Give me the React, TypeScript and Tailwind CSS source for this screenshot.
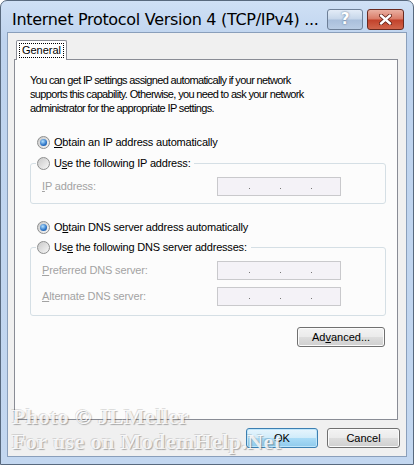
import React from 'react'

const UI_FONT = "font-['Liberation_Sans',Arial,sans-serif]"

const Radio = ({ checked }: { checked?: boolean }) => (
  <span className="flex h-[13px] w-[13px] shrink-0 items-center justify-center rounded-full border border-[#8e8f8f] bg-[linear-gradient(135deg,#c9c9c9,#f7f7f7)]">
    {checked && (
      <span className="h-[7px] w-[7px] rounded-full bg-[radial-gradient(circle_at_40%_35%,#b4e2ff,#2a72c6_60%,#0c4590)]" />
    )}
  </span>
)

const RadioRow = ({ checked, children }: { checked?: boolean; children: React.ReactNode }) => (
  <div className="flex h-[20px] items-center gap-[4px] px-[1px]">
    <Radio checked={checked} />
    <span className="whitespace-nowrap tracking-[-0.2px] text-black">{children}</span>
  </div>
)

const AddrBox = () => (
  <div className="flex h-[19px] w-[124px] items-center border border-[#c9c9cc] bg-[#f4f2f7] pl-[31px]">
    <span className="mt-[4px] h-[1px] w-[1px] bg-[#777]" />
    <span className="ml-[30px] mt-[4px] h-[1px] w-[1px] bg-[#777]" />
    <span className="ml-[30px] mt-[4px] h-[1px] w-[1px] bg-[#777]" />
  </div>
)

const AddrRow = ({ label }: { label: React.ReactNode }) => (
  <div className="flex items-center">
    <span className="w-[175px] whitespace-nowrap tracking-[-0.15px] text-[#a3a3a3]">{label}</span>
    <AddrBox />
  </div>
)

const Button = ({ children, primary, className = '' }: { children: React.ReactNode; primary?: boolean; className?: string }) => (
  <div
    className={`flex h-[20px] items-center justify-center rounded-[3px] border text-black ${
      primary
        ? 'border-[#3c7fb1] bg-[linear-gradient(#e7f5fd,#d1ecfa_48%,#a9dbf6_52%,#8fcaec)] shadow-[inset_0_0_0_1px_#bfe6fb]'
        : 'border-[#707070] bg-[linear-gradient(#f3f3f3,#ebebeb_48%,#dddddd_52%,#cfcfcf)] shadow-[inset_0_0_0_1px_#fbfbfb]'
    } ${className}`}
  >
    {children}
  </div>
)

export default function App() {
  return (
    <div className={`relative h-[465px] w-[414px] overflow-hidden bg-white text-[11px] ${UI_FONT}`}>
      <div className="flex h-full w-full flex-col rounded-t-[7px] border border-[#58697e] bg-[linear-gradient(#cfe0f5,#bed3ee_40px,#c3d7f0)]">
        {/* title bar */}
        <div className="flex h-[31px] shrink-0 items-center pl-[11px] pr-[9px]">
          <span className="flex-1 whitespace-nowrap pt-[7px] font-['DejaVu_Sans',sans-serif] text-[16px] tracking-[-0.3px] text-black">
            Internet Protocol Version 4 (TCP/IPv4) ...
          </span>
          <div className="flex items-center gap-[4px] pt-[5px]">
            <div className="flex h-[21px] w-[36px] items-center justify-center rounded-[3px] border border-[#6d7f97] bg-[linear-gradient(#e3ecf7,#c6d6ea_48%,#a9bfdb_52%,#b9cce4)] font-['DejaVu_Sans',sans-serif] text-[15px] font-bold text-white [text-shadow:0_0_2px_#4d6585]">
              ?
            </div>
            <div className="flex h-[21px] w-[37px] items-center justify-center rounded-[3px] border border-[#6a2a20] bg-[linear-gradient(#eab0a2,#d97a66_48%,#c2412a_52%,#d0654b)]">
              <svg width="13" height="11" viewBox="0 0 13 11">
                <path d="M2 1.5 L11 9.5 M11 1.5 L2 9.5" stroke="#5c1a10" strokeWidth="4" strokeLinecap="round" />
                <path d="M2 1.5 L11 9.5 M11 1.5 L2 9.5" stroke="#fff" strokeWidth="2.4" strokeLinecap="round" />
              </svg>
            </div>
          </div>
        </div>

        {/* client area */}
        <div className="mx-[6px] mb-[7px] flex flex-1 flex-col border border-[#8a9fbb] bg-[#f0f0f0]">
          <div className="flex pl-[8px] pt-[7px]">
            <div className="relative z-10 -mb-[1px] flex h-[20px] w-[51px] items-center justify-center rounded-t-[2px] border border-b-0 border-[#898c95] bg-white">
              <span className="border border-dotted border-black px-[2px] leading-[13px] text-black">General</span>
            </div>
          </div>
          <div className="ml-[6px] mr-[8px] flex h-[361px] flex-col border border-[#898c95] bg-[#fcfcfc] pl-[15px]">
            <p className="mt-[13px] whitespace-nowrap leading-[14px] tracking-[-0.65px] text-black">
              You can get IP settings assigned automatically if your network
              <br />
              supports this capability. Otherwise, you need to ask your network
              <br />
              administrator for the appropriate IP settings.
            </p>

            <div className="ml-[6px] mt-[17px]">
              <RadioRow checked>
                <span className="underline">O</span>btain an IP address automatically
              </RadioRow>
            </div>

            <fieldset className="mt-[1px] w-[356px] rounded-[3px] border border-[#d5dfe5] pb-[7px] pl-[11px]">
              <legend className="-ml-[6px] bg-[#fcfcfc] pr-[3px]">
                <RadioRow>
                  U<span className="underline">s</span>e the following IP address:
                </RadioRow>
              </legend>
              <div className="mt-[4px]">
                <AddrRow label={<><span className="underline">I</span>P address:</>} />
              </div>
            </fieldset>

            <div className="ml-[6px] mt-[13px]">
              <RadioRow checked>
                O<span className="underline">b</span>tain DNS server address automatically
              </RadioRow>
            </div>

            <fieldset className="w-[356px] rounded-[3px] border border-[#d5dfe5] pb-[9px] pl-[11px]">
              <legend className="-ml-[6px] bg-[#fcfcfc] pr-[3px]">
                <RadioRow>
                  Us<span className="underline">e</span> the following DNS server addresses:
                </RadioRow>
              </legend>
              <div className="mt-[4px] flex flex-col gap-[7px]">
                <AddrRow label={<><span className="underline">P</span>referred DNS server:</>} />
                <AddrRow label={<><span className="underline">A</span>lternate DNS server:</>} />
              </div>
            </fieldset>

            <div className="mt-[11px] flex w-[355px] justify-end">
              <Button className="w-[88px]">
                Ad<span className="underline">v</span>anced...
              </Button>
            </div>
          </div>

          <div className="mt-[8px] flex justify-end gap-[9px] pr-[6px]">
            <Button primary className="w-[72px]">OK</Button>
            <Button className="w-[73px]">Cancel</Button>
          </div>
        </div>
      </div>

      {/* watermark */}
      <div className="pointer-events-none absolute left-[12px] top-[404px] font-['Liberation_Serif',serif] text-[22px] font-bold leading-[25px] tracking-[0.4px] text-white/85 [text-shadow:1px_1px_1px_rgba(0,0,0,0.3),-1px_-1px_0_rgba(0,0,0,0.12)]">
        <div>Photo © JLMeller</div>
        <div>For use on ModemHelp.Net</div>
      </div>
    </div>
  )
}
